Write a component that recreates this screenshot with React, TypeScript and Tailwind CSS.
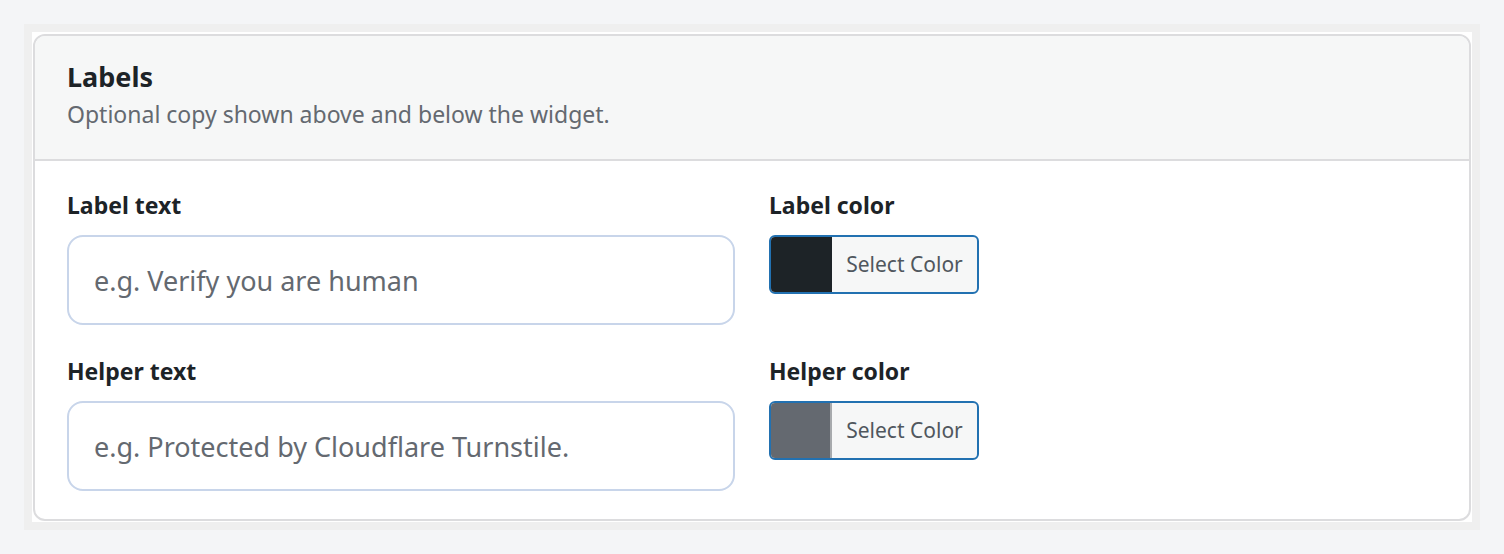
import React from 'react';

const font = { fontFamily: '"Noto Sans", "Open Sans", sans-serif' };

// Text input with the large rounded look
const TextField: React.FC<{ label: string; placeholder: string }> = ({ label, placeholder }) => (
  <div className="flex flex-col">
    <label className="text-[23px] leading-[28px] font-bold text-[#1d2327] mb-[16px]">{label}</label>
    <input
      type="text"
      placeholder={placeholder}
      className="h-[90px] w-full bg-white border-2 border-[#c8d5ea] rounded-[16px] px-[25px] text-[27px] text-[#1d2327] placeholder:text-[#646970] outline-none"
      style={font}
    />
  </div>
);

// Colour picker button: swatch + "Select Color"
const ColorField: React.FC<{ label: string; swatch: string }> = ({ label, swatch }) => (
  <div className="flex flex-col items-start">
    <label className="text-[23px] leading-[28px] font-bold text-[#1d2327] mb-[16px]">{label}</label>
    <button
      type="button"
      className="flex h-[59px] w-[210px] border-2 border-[#2271b1] rounded-[6px] overflow-hidden bg-[#f6f7f7]"
      style={font}
    >
      <span className={`w-[61px] h-full ${swatch}`}></span>
      <span className="flex-1 flex items-center justify-center text-[21px] text-[#50575e]">Select Color</span>
    </button>
  </div>
);

export default function App() {
  return (
    <div className="min-h-screen bg-[#f4f5f7] p-[24px]" style={font}>
      <div className="bg-[#efefef] p-[8px]">
        <div className="bg-white px-px pt-[2px] pb-px">
          <section className="border-2 border-[#dcdcde] rounded-[12px] overflow-hidden bg-white">
            {/* Header */}
            <div className="bg-[#f6f7f7] border-b-2 border-[#dcdcde] px-[32px] pt-[24px] pb-[29px]">
              <h2 className="text-[27px] leading-[34px] font-bold text-[#1d2327]">Labels</h2>
              <p className="mt-[4px] text-[23px] leading-[32px] text-[#646970]">
                Optional copy shown above and below the widget.
              </p>
            </div>

            {/* Fields */}
            <div className="grid grid-cols-2 gap-x-[34px] gap-y-[32px] px-[32px] pt-[30px] pb-[28px]">
              <TextField label="Label text" placeholder="e.g. Verify you are human" />
              <ColorField label="Label color" swatch="bg-[#1d2327]" />
              <TextField label="Helper text" placeholder="e.g. Protected by Cloudflare Turnstile." />
              <ColorField label="Helper color" swatch="bg-[#646970] border-r-2 border-[#a7aaad]" />
            </div>
          </section>
        </div>
      </div>
    </div>
  );
}
